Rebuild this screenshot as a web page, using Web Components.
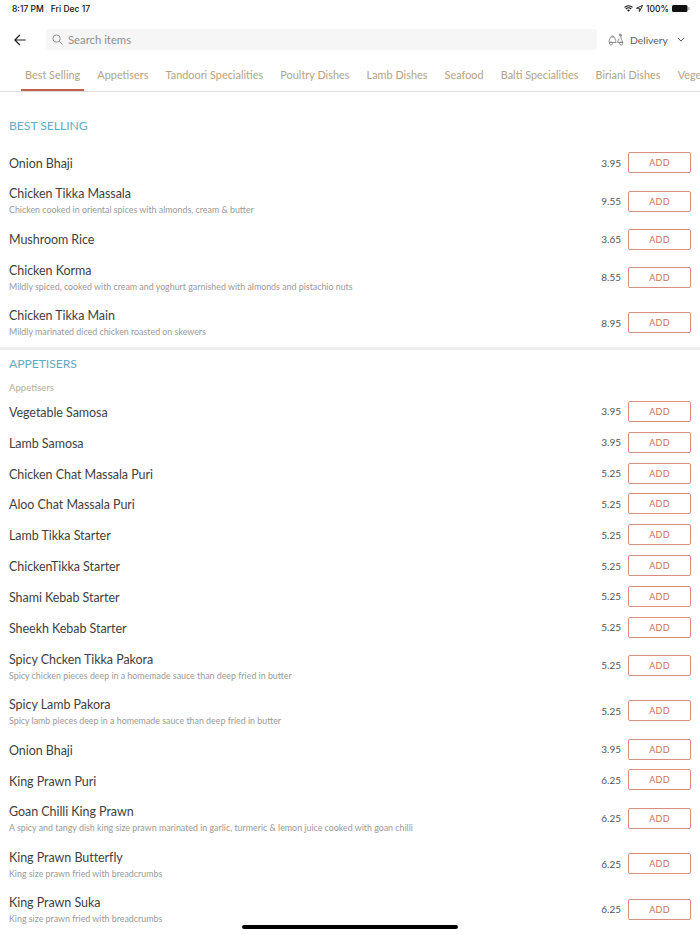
<!DOCTYPE html>
<html>
<head>
<meta charset="utf-8">
<style>
  html, body { margin: 0; padding: 0; background: #fff; }
  body { width: 700px; height: 934px; overflow: hidden; font-family: Lato, "Liberation Sans", sans-serif; position: relative; }
</style>
</head>
<body>
<status-bar></status-bar>
<search-header></search-header>
<category-tabs></category-tabs>

<menu-section heading="BEST SELLING" class="first">
  <menu-item name="Onion Bhaji" price="3.95"></menu-item>
  <menu-item name="Chicken Tikka Massala" price="9.55" desc="Chicken cooked in oriental spices with almonds, cream &amp; butter"></menu-item>
  <menu-item name="Mushroom Rice" price="3.65"></menu-item>
  <menu-item name="Chicken Korma" price="8.55" desc="Mildly spiced, cooked with cream and yoghurt garnished with almonds and pistachio nuts"></menu-item>
  <menu-item name="Chicken Tikka Main" price="8.95" desc="Mildly marinated diced chicken roasted on skewers"></menu-item>
</menu-section>

<menu-section heading="APPETISERS" sub="Appetisers">
  <menu-item name="Vegetable Samosa" price="3.95"></menu-item>
  <menu-item name="Lamb Samosa" price="3.95"></menu-item>
  <menu-item name="Chicken Chat Massala Puri" price="5.25"></menu-item>
  <menu-item name="Aloo Chat Massala Puri" price="5.25"></menu-item>
  <menu-item name="Lamb Tikka Starter" price="5.25"></menu-item>
  <menu-item name="ChickenTikka Starter" price="5.25"></menu-item>
  <menu-item name="Shami Kebab Starter" price="5.25"></menu-item>
  <menu-item name="Sheekh Kebab Starter" price="5.25"></menu-item>
  <menu-item name="Spicy Chcken Tikka Pakora" price="5.25" desc="Spicy chicken pieces deep in a homemade sauce than deep fried in butter"></menu-item>
  <menu-item name="Spicy Lamb Pakora" price="5.25" desc="Spicy lamb pieces deep in a homemade sauce than deep fried in butter"></menu-item>
  <menu-item name="Onion Bhaji" price="3.95"></menu-item>
  <menu-item name="King Prawn Puri" price="6.25"></menu-item>
  <menu-item name="Goan Chilli King Prawn" price="6.25" desc="A spicy and tangy dish king size prawn marinated in garlic, turmeric &amp; lemon juice cooked with goan chilli"></menu-item>
  <menu-item name="King Prawn Butterfly" price="6.25" desc="King size prawn fried with breadcrumbs"></menu-item>
  <menu-item name="King Prawn Suka" price="6.25" desc="King size prawn fried with breadcrumbs"></menu-item>
</menu-section>

<home-indicator></home-indicator>

<script>
  class StatusBar extends HTMLElement {
    constructor() {
      super();
      this.attachShadow({ mode: "open" });
      this.shadowRoot.innerHTML = `
        <style>
          :host {
            display: flex;
            justify-content: space-between;
            align-items: center;
            height: 17px;
            padding: 0 8px 0 12px;
            font: 500 8.500px Inter, sans-serif;
            color: #111;
          }
          .left { display: flex; gap: 7px; }
          .right { display: flex; align-items: center; gap: 3px; }
          svg { display: block; }
        </style>
        <div class="left"><span>8:17 PM</span><span>Fri Dec 17</span></div>
        <div class="right">
          <svg width="9" height="7" viewBox="0 0 10 8"><path d="M5 7.600 3.400 5.900a2.300 2.300 0 0 1 3.200 0zM2.500 5 1.500 4a5 5 0 0 1 7 0l-1 1a3.600 3.600 0 0 0-5 0zM.8 3.200 0 2.400a7.100 7.100 0 0 1 10 0l-.8.8a6 6 0 0 0-8.400 0z" fill="#111"/></svg>
          <svg width="7" height="7" viewBox="0 0 8 8"><path d="M7.600.4 .5 3.700h3.300v3.800z" fill="none" stroke="#111" stroke-width="1"/></svg>
          <span>100%</span>
          <svg width="20" height="9" viewBox="0 0 20 9"><rect x="0" y="1" width="15.500" height="7" rx="1.500" fill="#111"/><rect x="16.300" y="3" width="1.200" height="3" rx=".6" fill="#999"/></svg>
        </div>
      `;
    }
  }

  class SearchHeader extends HTMLElement {
    constructor() {
      super();
      this.attachShadow({ mode: "open" });
      this.shadowRoot.innerHTML = `
        <style>
          :host {
            display: flex;
            align-items: center;
            height: 21px;
            padding: 12px 0 0 14px;
          }
          svg { display: block; flex: none; }
          .box {
            flex: none;
            margin-left: 20px;
            width: 551px;
            height: 21px;
            display: flex;
            align-items: center;
            gap: 5px;
            padding-left: 6px;
            box-sizing: border-box;
            background: #f6f6f6;
            border-radius: 3px;
            font-size: 11.300px;
            color: #8e8e8e;
          }
          .delivery {
            display: flex;
            align-items: center;
            margin-left: 11px;
            font-size: 10.300px;
            color: #5c5c5c;
          }
          .delivery span { margin: 0 9px 0 6px; }
        </style>
        <svg width="12" height="12" viewBox="0 0 12 12" fill="none" stroke="#222" stroke-width="1.200"><path d="M11.700 6H.8M5.800 1 .8 6l5 5"/></svg>
        <div class="box">
          <svg width="11" height="11" viewBox="0 0 12 12" fill="none" stroke="#888" stroke-width="1"><circle cx="5" cy="5" r="4"/><path d="m8 8 3.500 3.500"/></svg>
          Search items
        </div>
        <div class="delivery">
          <svg width="16" height="13" viewBox="0 0 16 13" fill="none" stroke="#777" stroke-width=".8"><path d="M1 9.500c.2-3 1-4.500 2-5.500h3c1 1 1.800 2.500 2 5.500zM3 4c.3-1.500 2.700-1.500 3 0"/><circle cx="3" cy="10.500" r="1.500"/><path d="M10.800 1.200h1.700l.8 5 1.700 3.300H9.500l1.500-4"/><circle cx="12.500" cy="2.300" r="1"/><circle cx="13.200" cy="10.500" r="1.500"/></svg>
          <span>Delivery</span>
          <svg width="8" height="5" viewBox="0 0 10 6" fill="none" stroke="#444" stroke-width="1.200"><path d="m1 1 4 4 4-4"/></svg>
        </div>
      `;
    }
  }

  class CategoryTabs extends HTMLElement {
    constructor() {
      super();
      this.attachShadow({ mode: "open" });
      const tabs = ["Best Selling", "Appetisers", "Tandoori Specialities", "Poultry Dishes", "Lamb Dishes", "Seafood", "Balti Specialities", "Biriani Dishes", "Vegetable Dishes"];
      this.shadowRoot.innerHTML = `
        <style>
          :host {
            display: flex;
            height: 41px;
            padding-left: 21px;
            overflow: hidden;
            border-bottom: 1px solid #dcdcdc;
            font-size: 10.900px;
            line-height: 14px;
            color: #b5a284;
            white-space: nowrap;
          }
          .tab { padding: 18px 4px 0; height: 23px; margin-right: 9.100px; flex: none; }
          .tab.on { border-bottom: 2px solid #c4604c; height: 21px; }
        </style>
        ${tabs.map((t, i) => `<div class="tab${i === 0 ? " on" : ""}">${t}</div>`).join("")}
      `;
    }
  }

  class MenuSection extends HTMLElement {
    constructor() {
      super();
      this.attachShadow({ mode: "open" });
      const sub = this.getAttribute("sub");
      const first = this.classList.contains("first");
      this.shadowRoot.innerHTML = `
        <style>
          :host { display: block; --lift: 2px; }
          :host(.first) { --lift: 0px; padding-bottom: 1.300px; border-bottom: 3px solid #eeeeee; }
          h2 {
            margin: 0;
            padding: ${first ? "26px 9px 13.500px" : "6px 9px 0"};
            font: 400 12.200px/16px Lato, sans-serif;
            letter-spacing: -.05px;
            color: #62abc4;
          }
          .sub {
            padding: 9px 9px 0;
            height: 25px;
            box-sizing: border-box;
            font-size: 9.600px;
            line-height: 14px;
            color: #bbab90;
          }
        </style>
        <h2>${this.getAttribute("heading")}</h2>
        ${sub ? `<div class="sub">${sub}</div>` : ""}
        <slot></slot>
      `;
    }
  }

  class MenuItem extends HTMLElement {
    constructor() {
      super();
      this.attachShadow({ mode: "open" });
      const desc = this.getAttribute("desc");
      this.shadowRoot.innerHTML = `
        <style>
          :host {
            display: flex;
            align-items: center;
            padding: 0 9px;
            color: #3f3f3f;
          }
          .text { flex: 1; min-width: 0; padding: 7px 0 5px; }
          .name {
            font-size: 12.500px;
            line-height: 18.850px;
            letter-spacing: -.05px;
          }
          .desc {
            font-size: 8.850px;
            line-height: 12px;
            margin-bottom: 2.650px;
            color: #9a9a9a;
          }
          .price { font-size: 10px; color: #555; margin: 0 7px var(--lift) 0; }
          button {
            width: 63px;
            height: 21px;
            margin-bottom: var(--lift);
            padding: 0;
            background: #fff;
            border: 1px solid #d88f80;
            border-radius: 2px;
            font: 9px Lato, sans-serif;
            letter-spacing: .2px;
            color: #c8705f;
          }
        </style>
        <div class="text">
          <div class="name">${this.getAttribute("name")}</div>
          ${desc ? `<div class="desc">${desc.replace(/&/g, "&amp;")}</div>` : ""}
        </div>
        <div class="price">${this.getAttribute("price")}</div>
        <button>ADD</button>
      `;
    }
  }

  class HomeIndicator extends HTMLElement {
    constructor() {
      super();
      this.attachShadow({ mode: "open" });
      this.shadowRoot.innerHTML = `
        <style>
          :host {
            position: absolute;
            left: 242px;
            top: 925px;
            width: 216px;
            height: 4px;
            border-radius: 2px;
            background: #000;
          }
        </style>
      `;
    }
  }

  customElements.define("status-bar", StatusBar);
  customElements.define("search-header", SearchHeader);
  customElements.define("category-tabs", CategoryTabs);
  customElements.define("menu-section", MenuSection);
  customElements.define("menu-item", MenuItem);
  customElements.define("home-indicator", HomeIndicator);
</script>
</body>
</html>
